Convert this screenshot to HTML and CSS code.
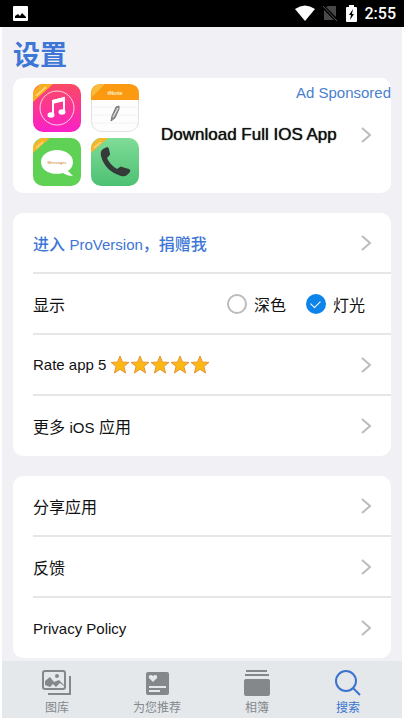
FILE: index.html
```html
<!DOCTYPE html>
<html lang="zh-CN">
<head>
    <meta charset="UTF-8">
    <meta name="viewport" content="width=device-width, initial-scale=1.0">
    <title>设置</title>
    <link rel="stylesheet" href="styles.css">
</head>
<body>
    <header class="status-bar">
        <svg class="status-photo" width="15" height="15" viewBox="0 0 15 15">
            <rect width="15" height="15" rx="1" fill="#fff"/>
            <path d="M2 12 V10 L5 8 L7 10 L9 7 L13 11 V12 Z" fill="#000"/>
        </svg>
        <div class="status-icons">
            <svg width="20" height="17" viewBox="0 0 20 17">
                <path d="M0 4 Q10 -3 20 4 L10 16 Z" fill="#fff"/>
            </svg>
            <svg width="15" height="17" viewBox="0 0 15 17">
                <path d="M5 1 H13 V12 L3 2 Z M1 5 L11 15 H1 Z" fill="#484848"/>
                <path d="M0 1 L14 16" stroke="#555" stroke-width="1"/>
            </svg>
            <svg width="11" height="17" viewBox="0 0 11 17">
                <path d="M3 0 H8 V2 H10 Q11 2 11 3 V16 Q11 17 10 17 H1 Q0 17 0 16 V3 Q0 2 1 2 H3 Z" fill="#fff"/>
                <path d="M7 4 L3 10 H5 L4 15 L8 9 H6 Z" fill="#000"/>
            </svg>
            <span class="clock">2:55</span>
        </div>
    </header>

    <main class="content">
        <h1>设置</h1>

        <a class="card ad" href="#">
            <span class="ad-label">Ad Sponsored</span>
            <span class="ad-body">
                <span class="app-grid">
                    <svg width="48" height="48" viewBox="0 0 48 48">
                        <defs>
                            <linearGradient id="music" x1="0" y1="0" x2="0" y2="1">
                                <stop offset="0" stop-color="#fb4a63"/>
                                <stop offset="1" stop-color="#fa20c8"/>
                            </linearGradient>
                            <clipPath id="tile"><rect width="48" height="48" rx="10"/></clipPath>
                        </defs>
                        <g clip-path="url(#tile)">
                            <rect width="48" height="48" fill="url(#music)"/>
                            <path d="M7 0 H20 L0 18 V7 Z" fill="#f7ae22"/>
                            <path d="M3 12 L13 3" stroke="#fcd270" stroke-width="2"/>
                        </g>
                        <circle cx="24" cy="24" r="17" fill="none" stroke="#ffd3e6" stroke-width="1"/>
                        <path d="M20 31 V17 L31 14 V28" fill="none" stroke="#fff" stroke-width="2"/>
                        <path d="M19 16 L32 13 V17 L19 20 Z" fill="#fff"/>
                        <ellipse cx="18" cy="31" rx="3.5" ry="2.8" fill="#fff"/>
                        <ellipse cx="29" cy="28" rx="3.5" ry="2.8" fill="#fff"/>
                    </svg>
                    <svg width="48" height="48" viewBox="0 0 48 48">
                        <g clip-path="url(#tile)">
                            <rect width="48" height="48" fill="#fdfdfd"/>
                            <path d="M0 23 H48 M0 31 H48 M0 39 H48" stroke="#f3f3f3"/>
                        </g>
                        <rect x=".5" y=".5" width="47" height="47" rx="10" fill="none" stroke="#e5e1de"/>
                        <path d="M0 16 V10 Q0 0 10 0 H38 Q48 0 48 10 V16 Z" fill="#fb9a10"/>
                        <path d="M10 0 H14 L1 13 Q-1 1 10 0 Z" fill="#f8bb3a"/>
                        <text class="tile-text" x="24" y="11" text-anchor="middle" fill="#fff0cf">iNote</text>
                        <path d="M20 37 L21 32 L25 23 L28 22 L28 25 L24 34 Z" fill="#999" stroke="#777" stroke-width="1"/>
                        <path d="M22 33 L27 24" stroke="#eee"/>
                    </svg>
                    <svg width="48" height="48" viewBox="0 0 48 48">
                        <g clip-path="url(#tile)">
                            <rect width="48" height="48" fill="#5fd154"/>
                            <path d="M7 0 H17 L0 15 V7 Z" fill="#f4b62a"/>
                            <path d="M3 10 L10 4" stroke="#fad06c" stroke-width="2"/>
                        </g>
                        <path d="M24 12 C33 12 40 17 40 24 C40 28 38 31 35 33 L40 38 C36 38 33 37 30 35 C19 38 8 33 8 24 C8 17 15 12 24 12 Z" fill="#fff"/>
                        <text class="bubble-text" x="24" y="26" text-anchor="middle" fill="#dda35c">Messages</text>
                    </svg>
                    <svg width="48" height="48" viewBox="0 0 48 48">
                        <defs>
                            <linearGradient id="phone" x1="0" y1="0" x2="0" y2="1">
                                <stop offset="0" stop-color="#7fdc96"/>
                                <stop offset="1" stop-color="#4dc173"/>
                            </linearGradient>
                        </defs>
                        <g clip-path="url(#tile)">
                            <rect width="48" height="48" fill="url(#phone)"/>
                            <path d="M7 0 H17 L0 15 V7 Z" fill="#f4b62a"/>
                            <path d="M3 10 L10 4" stroke="#fad06c" stroke-width="2"/>
                        </g>
                        <path d="M12 11 L16 9 Q17 9 18 11 L19 16 Q19 17 18 18 L16 20 Q19 27 26 31 L29 29 Q30 28 31 29 L38 31 Q40 32 39 34 L36 37 Q34 39 30 38 Q14 33 10 18 Q9 13 12 11 Z" fill="#333a37"/>
                    </svg>
                </span>
                <span class="ad-title">Download Full IOS App</span>
                <svg class="chevron" width="10" height="16" viewBox="0 0 10 16"><path d="M1 1 L9 8 L1 15"/></svg>
            </span>
        </a>

        <section class="card list">
            <a class="row pro" href="#">
                <span>进入 <span class="latin">ProVersion</span>，捐赠我</span>
                <svg class="chevron" width="10" height="16" viewBox="0 0 10 16"><path d="M1 1 L9 8 L1 15"/></svg>
            </a>
            <div class="row">
                <span>显示</span>
                <div class="theme">
                    <label><input type="radio" name="theme" value="dark">深色</label>
                    <label><input type="radio" name="theme" value="light" checked>灯光</label>
                </div>
            </div>
            <a class="row" href="#">
                <span class="rate latin">Rate app 5
                    <svg width="100" height="19" viewBox="0 0 100 19">
                        <defs>
                            <path id="star" d="M10 1 L12.4 7 L19 7.4 L13.9 11.4 L15.6 18 L10 14.3 L4.4 18 L6.1 11.4 L1 7.4 L7.6 7 Z" fill="#fdb913" stroke="#e8953a" stroke-width="1" stroke-linejoin="round"/>
                        </defs>
                        <use href="#star"/>
                        <use href="#star" x="20"/>
                        <use href="#star" x="40"/>
                        <use href="#star" x="60"/>
                        <use href="#star" x="80"/>
                    </svg>
                </span>
                <svg class="chevron" width="10" height="16" viewBox="0 0 10 16"><path d="M1 1 L9 8 L1 15"/></svg>
            </a>
            <a class="row" href="#">
                <span>更多 <span class="latin">iOS</span> 应用</span>
                <svg class="chevron" width="10" height="16" viewBox="0 0 10 16"><path d="M1 1 L9 8 L1 15"/></svg>
            </a>
        </section>

        <section class="card list">
            <a class="row" href="#">
                <span>分享应用</span>
                <svg class="chevron" width="10" height="16" viewBox="0 0 10 16"><path d="M1 1 L9 8 L1 15"/></svg>
            </a>
            <a class="row" href="#">
                <span>反馈</span>
                <svg class="chevron" width="10" height="16" viewBox="0 0 10 16"><path d="M1 1 L9 8 L1 15"/></svg>
            </a>
            <a class="row" href="#">
                <span class="latin">Privacy Policy</span>
                <svg class="chevron" width="10" height="16" viewBox="0 0 10 16"><path d="M1 1 L9 8 L1 15"/></svg>
            </a>
        </section>
    </main>

    <nav class="tabs">
        <a href="#">
            <svg width="30" height="28" viewBox="0 0 30 28">
                <rect x="1" y="2" width="22" height="18" rx="2" fill="none" stroke="#84888b" stroke-width="2"/>
                <path d="M3 12 L8 8 L12 13 L17 11 L22 16 V17 L18 14 L14 18 L11 15 L8 18 L3 16 Z" fill="#84888b"/>
                <circle cx="15" cy="7" r="2" fill="#84888b"/>
                <path d="M28 7 V25 H6" fill="none" stroke="#84888b" stroke-width="2"/>
            </svg>
            图库
        </a>
        <a href="#">
            <svg width="30" height="28" viewBox="0 0 30 28">
                <rect x="4" y="3" width="23" height="23" rx="2" fill="#84888b"/>
                <path d="M11 13 L7 9 C6 6 9 5 11 7 C13 5 16 6 15 9 Z" fill="#e4e8eb"/>
                <path d="M7 18 H24 M7 22 H18" stroke="#e4e8eb" stroke-width="2"/>
            </svg>
            为您推荐
        </a>
        <a href="#">
            <svg width="30" height="28" viewBox="0 0 30 28">
                <path d="M4 2 H25 M3 6 H27" stroke="#84888b" stroke-width="2"/>
                <rect x="2" y="10" width="26" height="17" rx="2" fill="#84888b"/>
            </svg>
            相簿
        </a>
        <a class="active" href="#">
            <svg width="30" height="28" viewBox="0 0 30 28">
                <circle cx="13" cy="12" r="10" fill="none" stroke="#3c73cf" stroke-width="2"/>
                <path d="M20 19 L27 26" stroke="#3c73cf" stroke-width="2"/>
            </svg>
            搜索
        </a>
    </nav>
</body>
</html>
```
FILE: styles.css
```css
* {
    box-sizing: border-box;
}
body {
    margin: 0;
    min-height: 100vh;
    display: flex;
    flex-direction: column;
    background-color: #fff;
    font-family: "Liberation Sans", "Noto Sans CJK SC", sans-serif;
    font-size: 16px;
    color: #111;
}
a {
    color: inherit;
    text-decoration: none;
}
.status-bar {
    display: flex;
    justify-content: space-between;
    align-items: center;
    height: 27px;
    padding: 0 8px 0 13px;
    background-color: #000;
}
.status-icons {
    display: flex;
    align-items: center;
    gap: 8px;
}
.clock {
    font-family: Roboto, sans-serif;
    font-weight: 500;
    color: #fff;
}
.content {
    flex: 1;
    margin: 0 2px;
    padding: 9px 11px 2px;
    background-color: #f0f0f5;
}
h1 {
    margin: 0 0 6px;
    font-family: "Noto Sans CJK SC", sans-serif;
    font-size: 27px;
    line-height: 36px;
    font-weight: 700;
    color: #3d76d6;
}
.card {
    display: block;
    margin-bottom: 20px;
    background-color: #fff;
    border-radius: 10px;
}
.card:last-child {
    margin-bottom: 0;
}
.ad {
    position: relative;
    padding: 6px 20px 7px;
}
.ad-label {
    position: absolute;
    top: 4px;
    right: 0;
    line-height: 22px;
    font-size: 15px;
    color: #4a7fd0;
}
.ad-body {
    display: flex;
    align-items: center;
}
.app-grid {
    display: grid;
    grid-template-columns: 48px 48px;
    gap: 6px 10px;
    margin-right: 22px;
}
.app-grid svg {
    display: block;
}
.tile-text {
    font-size: 6px;
    font-weight: 700;
}
.bubble-text {
    font-size: 4px;
    font-weight: 700;
}
.ad-title {
    flex: 1;
    font-size: 17px;
    white-space: nowrap;
    text-shadow: 0 0 1px #111;
}
.chevron {
    flex: none;
}
.chevron path {
    fill: none;
    stroke: #bcbcc0;
    stroke-width: 2;
}
.list {
    padding-left: 20px;
}
.row {
    display: flex;
    justify-content: space-between;
    align-items: center;
    height: 61px;
    padding-right: 20px;
    border-bottom: 2px solid #e6e6e8;
}
.row:last-child {
    height: 60px;
    border-bottom: none;
}
.latin {
    font-size: 15px;
}
.pro {
    font-weight: 500;
    color: #3d76d6;
}
.rate {
    display: flex;
    align-items: center;
    gap: 4px;
}
.theme {
    display: flex;
    gap: 20px;
    padding-right: 6px;
}
.theme label {
    display: flex;
    align-items: center;
    gap: 7px;
}
.theme input {
    appearance: none;
    width: 20px;
    height: 20px;
    margin: 0;
    border: 2px solid #bbb;
    border-radius: 50%;
}
.theme input:checked {
    display: grid;
    place-items: center;
    border-color: #0c84ea;
    background-color: #0c84ea;
}
.theme input:checked::before {
    content: "";
    width: 8px;
    height: 5px;
    margin-bottom: 2px;
    border-left: 1px solid #fff;
    border-bottom: 1px solid #fff;
    transform: rotate(-45deg);
}
.tabs {
    display: grid;
    grid-template-columns: 100fr 100fr 100fr 82fr;
    margin: 0 2px 2px;
    padding: 8px 13px 0 5px;
    background-color: #e4e8eb;
}
.tabs a {
    display: flex;
    flex-direction: column;
    align-items: center;
    gap: 2px;
    font-size: 12px;
    line-height: 19px;
    color: #84888b;
}
.tabs .active {
    color: #3c73cf;
}
```
